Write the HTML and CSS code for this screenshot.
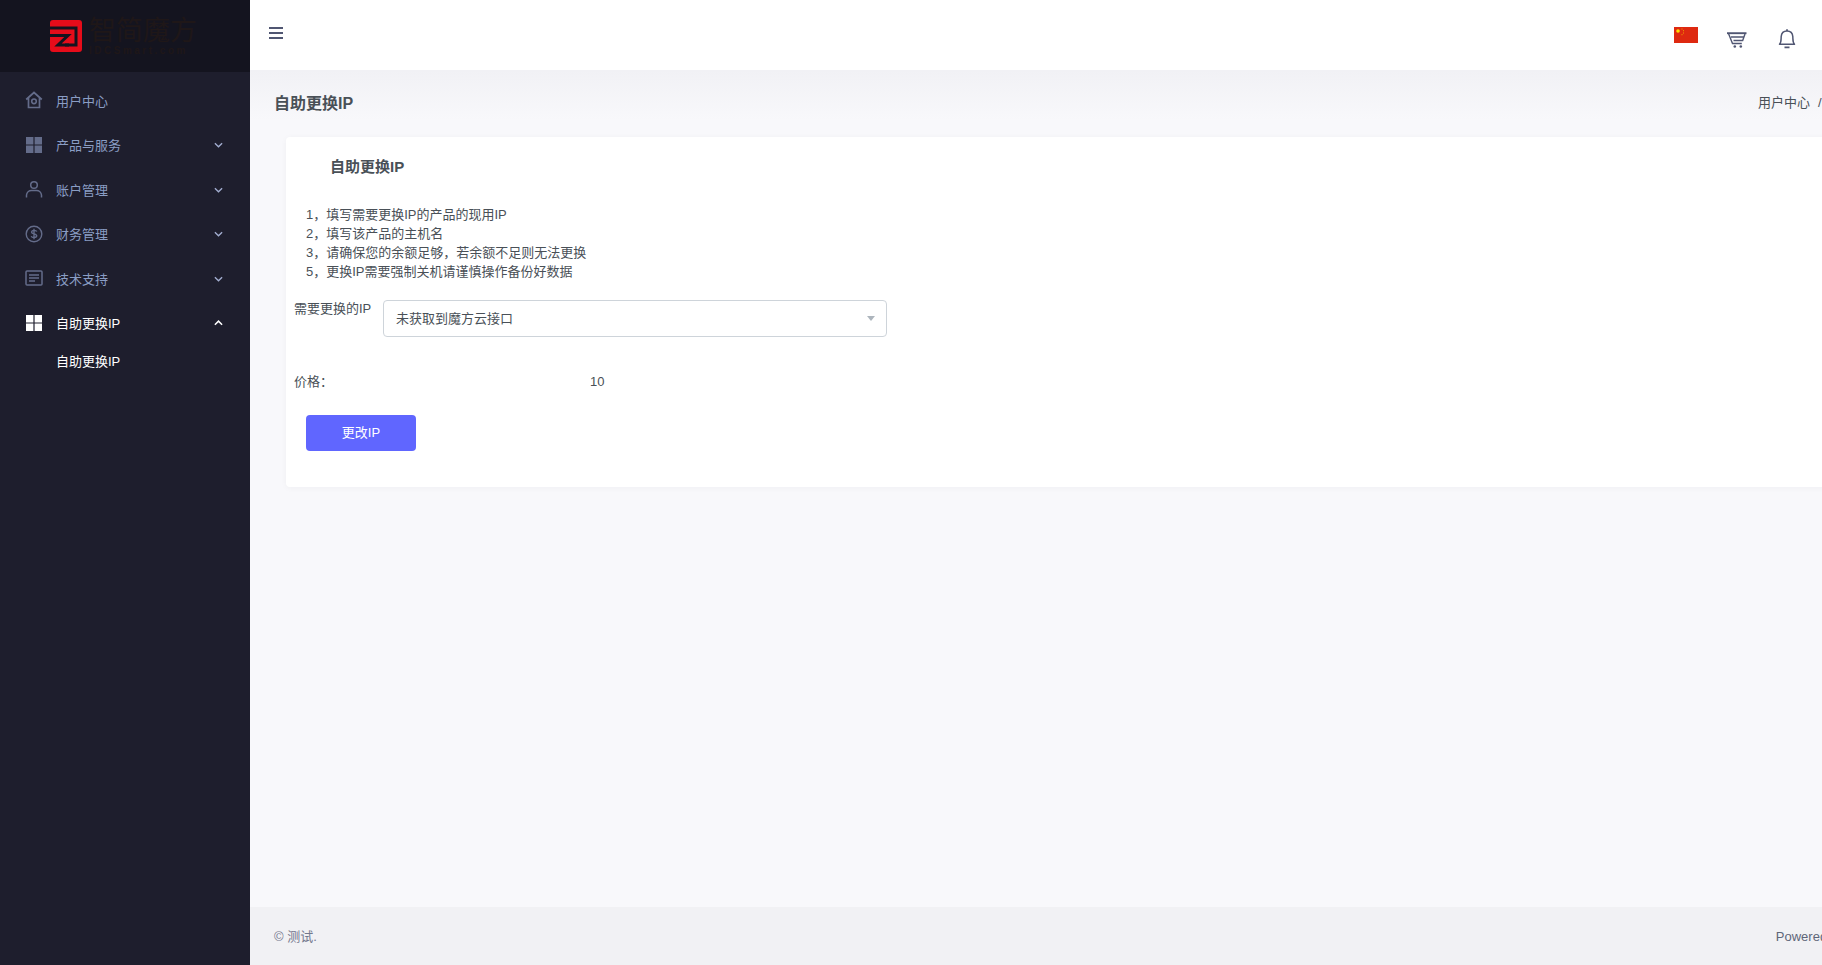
FILE: index.html
```html
<!DOCTYPE html>
<html lang="zh-CN">
<head>
<meta charset="utf-8">
<title>自助更换IP</title>
<link rel="stylesheet" href="styles.css">
</head>
<body>
<div class="app">
  <aside class="sidebar">
    <div class="brand">
      <svg class="brand-mark" viewBox="0 0 32 32" width="32" height="32">
        <rect width="32" height="32" rx="3" fill="#e60c1a"/>
        <path d="M0 8H26V25H15" fill="none" stroke="#14141f" stroke-width="3"/>
        <path d="M0 15.500H18L8 25H19" fill="none" stroke="#14141f" stroke-width="3"/>
      </svg>
      <div class="brand-text">
        <span class="brand-name">智简魔方</span>
        <span class="brand-sub">IDCSmart.com</span>
      </div>
    </div>
    <nav class="nav">
      <a class="nav-item">
        <svg class="nav-icon" viewBox="0 0 18 18"><path d="M1.200 8.500 9 1.500 16.800 8.500M3.500 6.800V16.500H14.500V6.800" fill="none" stroke="currentColor" stroke-width="1.700"/><circle cx="9" cy="10.300" r="2.300" fill="none" stroke="currentColor" stroke-width="1.600"/></svg>
        <span class="nav-label">用户中心</span>
      </a>
      <a class="nav-item">
        <svg class="nav-icon" viewBox="0 0 18 18"><path d="M1 1H8.400V8.400H1ZM9.600 1H17V8.400H9.600ZM1 9.600H8.400V17H1ZM9.600 9.600H17V17H9.600Z" fill="currentColor"/></svg>
        <span class="nav-label">产品与服务</span>
        <svg class="chev" viewBox="0 0 10 6"><path d="M1 1 5 5 9 1" fill="none" stroke="currentColor" stroke-width="1.500"/></svg>
      </a>
      <a class="nav-item">
        <svg class="nav-icon" viewBox="0 0 18 18"><circle cx="9" cy="5" r="3.300" fill="none" stroke="currentColor" stroke-width="1.500"/><path d="M1.500 17.500V15a5 5 0 0 1 5-4.500h5a5 5 0 0 1 5 4.500v2.500" fill="none" stroke="currentColor" stroke-width="1.500"/></svg>
        <span class="nav-label">账户管理</span>
        <svg class="chev" viewBox="0 0 10 6"><path d="M1 1 5 5 9 1" fill="none" stroke="currentColor" stroke-width="1.500"/></svg>
      </a>
      <a class="nav-item">
        <svg class="nav-icon" viewBox="0 0 18 18"><circle cx="9" cy="9" r="7.800" fill="none" stroke="currentColor" stroke-width="1.400"/><path d="M11.800 6.500C11 5 7 4.800 6.600 6.800 6.200 9.300 12 8.500 11.700 11 11.300 13.200 7 13 6.200 11.300M9 3.800V14.200" fill="none" stroke="currentColor" stroke-width="1.400"/></svg>
        <span class="nav-label">财务管理</span>
        <svg class="chev" viewBox="0 0 10 6"><path d="M1 1 5 5 9 1" fill="none" stroke="currentColor" stroke-width="1.500"/></svg>
      </a>
      <a class="nav-item">
        <svg class="nav-icon" viewBox="0 0 18 18"><rect x="1" y="2" width="16" height="14" rx="1" fill="none" stroke="currentColor" stroke-width="1.500"/><path d="M4 6H14M4 9H14M4 12H10" fill="none" stroke="currentColor" stroke-width="1.400"/></svg>
        <span class="nav-label">技术支持</span>
        <svg class="chev" viewBox="0 0 10 6"><path d="M1 1 5 5 9 1" fill="none" stroke="currentColor" stroke-width="1.500"/></svg>
      </a>
      <a class="nav-item is-active">
        <svg class="nav-icon" viewBox="0 0 18 18"><path d="M1 1H8.400V8.400H1ZM9.600 1H17V8.400H9.600ZM1 9.600H8.400V17H1ZM9.600 9.600H17V17H9.600Z" fill="currentColor"/></svg>
        <span class="nav-label">自助更换IP</span>
        <svg class="chev" viewBox="0 0 10 6"><path d="M1 5 5 1 9 5" fill="none" stroke="currentColor" stroke-width="1.700"/></svg>
      </a>
      <a class="nav-sub">自助更换IP</a>
    </nav>
  </aside>
  <div class="main">
    <header class="topbar">
      <svg class="burger" viewBox="0 0 14 12" width="14" height="12"><path d="M0 1H14M0 6H14M0 11H14" stroke="#505672" stroke-width="1.800"/></svg>
      <div class="top-actions">
        <svg class="flag" viewBox="0 0 24 16" width="24" height="16">
          <rect width="24" height="16" fill="#de2910"/>
          <circle cx="4" cy="4" r="1.800" fill="#ffde00"/>
          <path d="M8 1.500v1M9.500 3.200v1M9.500 5.500v1M8 7.200v1" stroke="#f0a000" stroke-width="1"/>
        </svg>
        <svg class="cart" viewBox="0 0 20 16" width="20" height="16"><path d="M0 1.200H19.500" stroke="#505672" stroke-width="1.900"/><path d="M1.500 1.500 5.500 11.500H14.800M4 5H17M6.500 8.500H16M18 2 15.500 9" fill="none" stroke="#505672" stroke-width="1.400"/><circle cx="7.800" cy="14.500" r="1.300" fill="#505672"/><circle cx="13.800" cy="14.500" r="1.300" fill="#505672"/></svg>
        <svg class="bell" viewBox="0 0 18 20" width="18" height="20"><path d="M1.500 15.300C3.500 13.500 3 10 3.200 7.500 3.500 3.500 6 2 9 2s5.500 1.500 5.800 5.500C15 10 14.500 13.500 16.500 15.300Z" fill="none" stroke="#505672" stroke-width="1.500" stroke-linejoin="round"/><path d="M9 .300V2M6.500 18.300H11.500" stroke="#505672" stroke-width="1.700"/></svg>
      </div>
    </header>
    <main class="content">
      <div class="page-head">
        <h1 class="page-title">自助更换IP</h1>
        <div class="crumbs"><span>用户中心</span><span class="crumb-sep">/</span><span>自助更换IP</span></div>
      </div>
      <section class="card">
        <h2 class="card-title">自助更换IP</h2>
        <ol class="steps">
          <li>1，填写需要更换IP的产品的现用IP</li>
          <li>2，填写该产品的主机名</li>
          <li>3，请确保您的余额足够，若余额不足则无法更换</li>
          <li>5，更换IP需要强制关机请谨慎操作备份好数据</li>
        </ol>
        <div class="field">
          <label class="field-label">需要更换的IP</label>
          <div class="select"><span>未获取到魔方云接口</span><i class="caret"></i></div>
        </div>
        <div class="price"><span class="price-label">价格：</span><span>10</span></div>
        <button class="btn" type="button">更改IP</button>
      </section>
    </main>
    <footer class="footer">
      <span>© 测试.</span>
      <span class="powered">Powered by IDCSmart</span>
    </footer>
  </div>
</div>
</body>
</html>
```
FILE: styles.css
```css
* { box-sizing: border-box; }
html, body { margin: 0; height: 965px; overflow: hidden; }
body {
  font-family: "Liberation Sans", "Noto Sans CJK SC", sans-serif;
  font-size: 13px;
  color: #495057;
  background: #f8f8fb;
}
.app { display: flex; width: 2072px; height: 965px; }
.sidebar { flex: 0 0 250px; background: #1e1e2d; display: flex; flex-direction: column; }
.brand {
  height: 72px;
  background: #14141f;
  display: flex;
  align-items: center;
  gap: 7px;
  padding: 0 0 0 50px;
}
.brand-mark { flex: none; margin-top: -1px; }
.brand-text { display: flex; flex-direction: column; color: #1f1718; margin-top: -1px; }
.brand-name { font-size: 27px; line-height: 30px; white-space: nowrap; }
.brand-sub { font-size: 10px; line-height: 10px; font-weight: 700; letter-spacing: 2.500px; white-space: nowrap; }
.nav { display: flex; flex-direction: column; padding-top: 6px; }
.nav-item {
  height: 44.500px;
  display: flex;
  align-items: center;
  padding: 0 27px 0 25px;
  color: #8a9dc4;
}
.nav-icon { width: 18px; height: 18px; color: #646c8a; flex: none; margin-right: 13px; }
.nav-label { flex: 1; white-space: nowrap; }
.chev { width: 9px; height: 6px; color: #a3aed0; flex: none; margin-top: 1px; }
.is-active { color: #fff; }
.is-active .nav-icon, .is-active .chev { color: #fff; }
.nav-sub { display: block; color: #fff; padding: 7px 0 0 56px; line-height: 19px; }
.main { flex: 1; display: flex; flex-direction: column; min-width: 0; }
.topbar {
  height: 70px;
  width: 1572px;
  background: #fff;
  display: flex;
  align-items: center;
  padding: 0 26px 0 19px;
  justify-content: space-between;
}
.burger { margin-top: -4px; }
.top-actions { display: flex; align-items: center; }
.flag { margin: -1px 29px 0 0; }
.cart { margin: 9px 31px 0 0; }
.bell { margin-top: 8px; }
.content {
  flex: 1;
  padding: 0 0 0 24px;
  background: linear-gradient(#f1f1f5, #f8f8fb 50px);
}
.page-head {
  display: flex;
  justify-content: space-between;
  align-items: center;
  height: 63px;
  margin-bottom: 4px;
}
.page-title { margin: 0; font-size: 16px; font-weight: 700; color: #495057; }
.crumbs { width: 314px; flex: none; white-space: nowrap; font-size: 13px; }
.crumb-sep { margin: 0 8px; }
.card {
  margin-left: 12px;
  margin-right: 30px;
  height: 350px;
  background: #fff;
  border-radius: 4px;
  box-shadow: 0 1px 6px rgba(30, 30, 60, .04);
  padding: 19px 20px 0 8px;
}
.card-title { margin: 0 0 0 36px; font-size: 15px; line-height: 22px; font-weight: 700; color: #495057; }
.steps { list-style: none; margin: 27px 0 0 12px; padding: 0; line-height: 19px; }
.field { display: flex; margin-top: 19px; }
.field-label { width: 89px; flex: none; line-height: 19px; margin-top: -1px; }
.select {
  width: 504px;
  height: 37px;
  border: 1px solid #ced4da;
  border-radius: 4px;
  display: flex;
  align-items: center;
  justify-content: space-between;
  padding: 0 11px 0 12px;
  font-size: 13px;
}
.select span { margin-top: -2px; }
.caret { width: 0; height: 0; border: 4px solid transparent; border-top: 5px solid #adb5bd; border-bottom: 0; }
.price { display: flex; margin-top: 35px; line-height: 19px; }
.price-label { width: 296px; flex: none; }
.btn {
  display: block;
  margin: 24px 0 0 12px;
  width: 110px;
  height: 36px;
  background: #6066ff;
  border: 0;
  border-radius: 4px;
  color: #fff;
  font: inherit;
  padding: 0 0 4px;
}
.footer {
  height: 58px;
  flex: none;
  width: 100%;
  background: #f1f1f4;
  color: #74788d;
  display: flex;
  align-items: center;
  padding: 0 0 2px 24px;
}
.powered { margin: 2px 0 0 1459px; white-space: nowrap; color: #5f6679; }
```
